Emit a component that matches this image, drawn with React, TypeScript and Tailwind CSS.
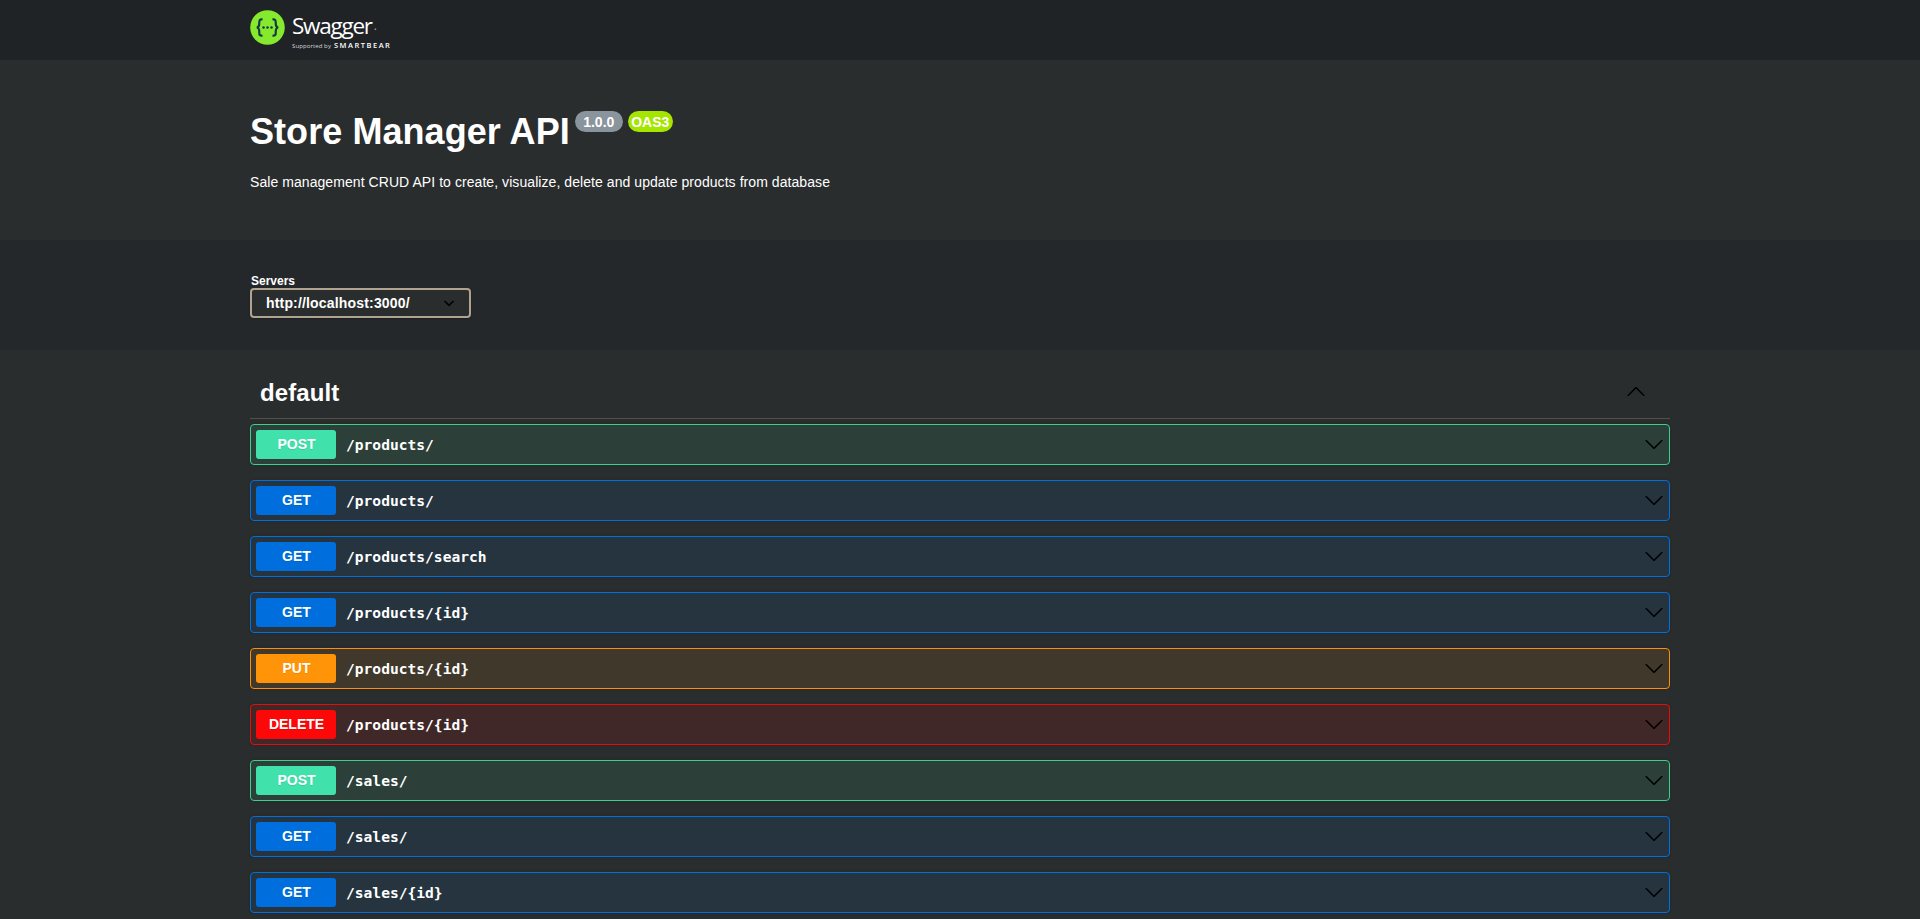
type Method = "POST" | "GET" | "PUT" | "DELETE";

const styles: Record<Method, { row: string; badge: string }> = {
  POST: { row: "border-[#3dcf8c] bg-[#2c3f39]", badge: "bg-[#40e1aa]" },
  GET: { row: "border-[#0070df] bg-[#26343f]", badge: "bg-[#006fdd]" },
  PUT: { row: "border-[#fc9008] bg-[#40382a]", badge: "bg-[#ff9408]" },
  DELETE: { row: "border-[#e60c0c] bg-[#402829]", badge: "bg-[#fc0808]" },
};

const operations: { method: Method; path: string }[] = [
  { method: "POST", path: "/products/" },
  { method: "GET", path: "/products/" },
  { method: "GET", path: "/products/search" },
  { method: "GET", path: "/products/{id}" },
  { method: "PUT", path: "/products/{id}" },
  { method: "DELETE", path: "/products/{id}" },
  { method: "POST", path: "/sales/" },
  { method: "GET", path: "/sales/" },
  { method: "GET", path: "/sales/{id}" },
];

function Chevron({ up = false }: { up?: boolean }) {
  return (
    <svg width="20" height="20" viewBox="0 0 20 20" className={up ? "rotate-180" : "mb-[2px]"} aria-hidden="true">
      <path d="M17.418 6.109c.272-.268.709-.268.979 0s.271.701 0 .969l-7.908 7.83c-.27.268-.707.268-.979 0l-7.908-7.83c-.27-.268-.27-.701 0-.969.271-.268.709-.268.979 0L10 13.25l7.418-7.141z" />
    </svg>
  );
}

function Logo() {
  return (
    <div className="flex h-[41px] gap-[7px]">
      <svg width="35" height="35" viewBox="0 0 35 35" aria-hidden="true">
        <circle cx="17.5" cy="17.5" r="17.3" fill="#85ea2d" />
        <g fill="none" stroke="#173647" strokeWidth="2.1" transform="translate(17.5 17.5) scale(1.04 1.06) translate(-17.5 -17.5)">
          <path d="M12.7 9.8c-2.6-.3-3.2.7-3.1 3 .1 2.6.1 4.5-2.5 4.7 2.6.2 2.6 2.1 2.5 4.7-.1 2.3.5 3.3 3.1 3" />
          <path d="M22.3 9.8c2.6-.3 3.2.7 3.1 3-.1 2.6-.1 4.5 2.5 4.7-2.6.2-2.6 2.1-2.5 4.7.1 2.3-.5 3.3-3.1 3" />
        </g>
        <g fill="#173647">
          <circle cx="13.5" cy="17.5" r="1.25" />
          <circle cx="17.5" cy="17.5" r="1.25" />
          <circle cx="21.5" cy="17.5" r="1.25" />
        </g>
      </svg>
      <div className="flex flex-col text-white">
        <div className="flex h-[31px] items-end font-['Open_Sans','Noto_Sans',sans-serif] text-[22.5px] leading-[28px] tracking-[-1.25px]">
          Swagger<span className="ml-[2px] text-[12px] tracking-normal text-[#aaa]">.</span>
        </div>
        <div className="flex items-baseline gap-[3px] whitespace-nowrap font-['Open_Sans',sans-serif] text-[6px] leading-[10px]">
          <span className="tracking-[0.1px] text-[#d8d8d8]">Supported by</span>
          <span className="text-[7.5px] font-semibold tracking-[1.5px]">SMARTBEAR</span>
        </div>
      </div>
    </div>
  );
}

export default function App() {
  return (
    <div className="h-[919px] overflow-hidden bg-[#2a2d2e] font-['Liberation_Sans',Arial,sans-serif] text-white">
      <header className="h-[60px] bg-[#1f2326] pt-[10px]">
        <div className="mx-auto w-[1420px]">
          <Logo />
        </div>
      </header>

      <section className="mx-auto h-[180px] w-[1420px] pt-[51px]">
        <h1 className="flex items-start text-[36px] leading-[42px] font-bold">
          <span className="tracking-[0.06px]">Store Manager API</span>
          <span className="ml-[5px] flex h-[21px] w-12 items-center justify-center rounded-full bg-[#89949c] text-sm leading-none">1.0.0</span>
          <span className="ml-[5px] flex h-[21px] w-[45px] items-center justify-center rounded-full bg-[#a4e600] text-sm leading-none">OAS3</span>
        </h1>
        <p className="mt-[19px] text-sm leading-5 tracking-[0.065px]">Sale management CRUD API to create, visualize, delete and update products from database</p>
      </section>

      <section className="h-[110px] bg-[#24282b] pt-[34px]">
        <div className="mx-auto w-[1420px]">
          <div className="ml-px text-xs leading-[14px] font-bold">Servers</div>
          <button className="flex h-[30px] w-[221px] items-center justify-between rounded-[4px] border-2 border-[#b0a38f] bg-[#2a2d2e] px-3.5 text-sm font-bold tracking-[0.17px] shadow-[0_1px_2px_rgba(0,0,0,0.25)]">
            <span>http://localhost:3000/</span>
            <svg width="12" height="12" viewBox="0 0 12 12" fill="none" stroke="#000" strokeWidth="1.6" aria-hidden="true">
              <path d="M1.5 4L6 8.3 10.5 4" />
            </svg>
          </button>
        </div>
      </section>

      <main className="mx-auto w-[1420px] pt-5">
        <div className="flex h-[49px] items-center justify-between border-b border-[#52504a] pr-6 pb-1 pl-2.5">
          <h2 className="mt-[2px] text-2xl leading-none font-bold tracking-[0.08px]">default</h2>
          <Chevron up />
        </div>
        <div className="mt-[5px] flex flex-col gap-[15px]">
          {operations.map((op) => (
            <div
              key={op.method + op.path}
              className={`flex h-[41px] items-center rounded-[4px] border px-[5px] shadow-[0_0_3px_rgba(0,0,0,0.19)] ${styles[op.method].row}`}
            >
              <span className={`flex h-[29px] w-20 items-center justify-center rounded-[3px] pb-[2px] pl-px text-sm font-bold [text-shadow:0_1px_0_rgba(0,0,0,0.1)] ${styles[op.method].badge}`}>
                {op.method}
              </span>
              <span className="ml-2.5 flex-1 font-['DejaVu_Sans_Mono',monospace] text-[14.6px] leading-5 font-bold">{op.path}</span>
              <Chevron />
            </div>
          ))}
        </div>
      </main>
    </div>
  );
}
